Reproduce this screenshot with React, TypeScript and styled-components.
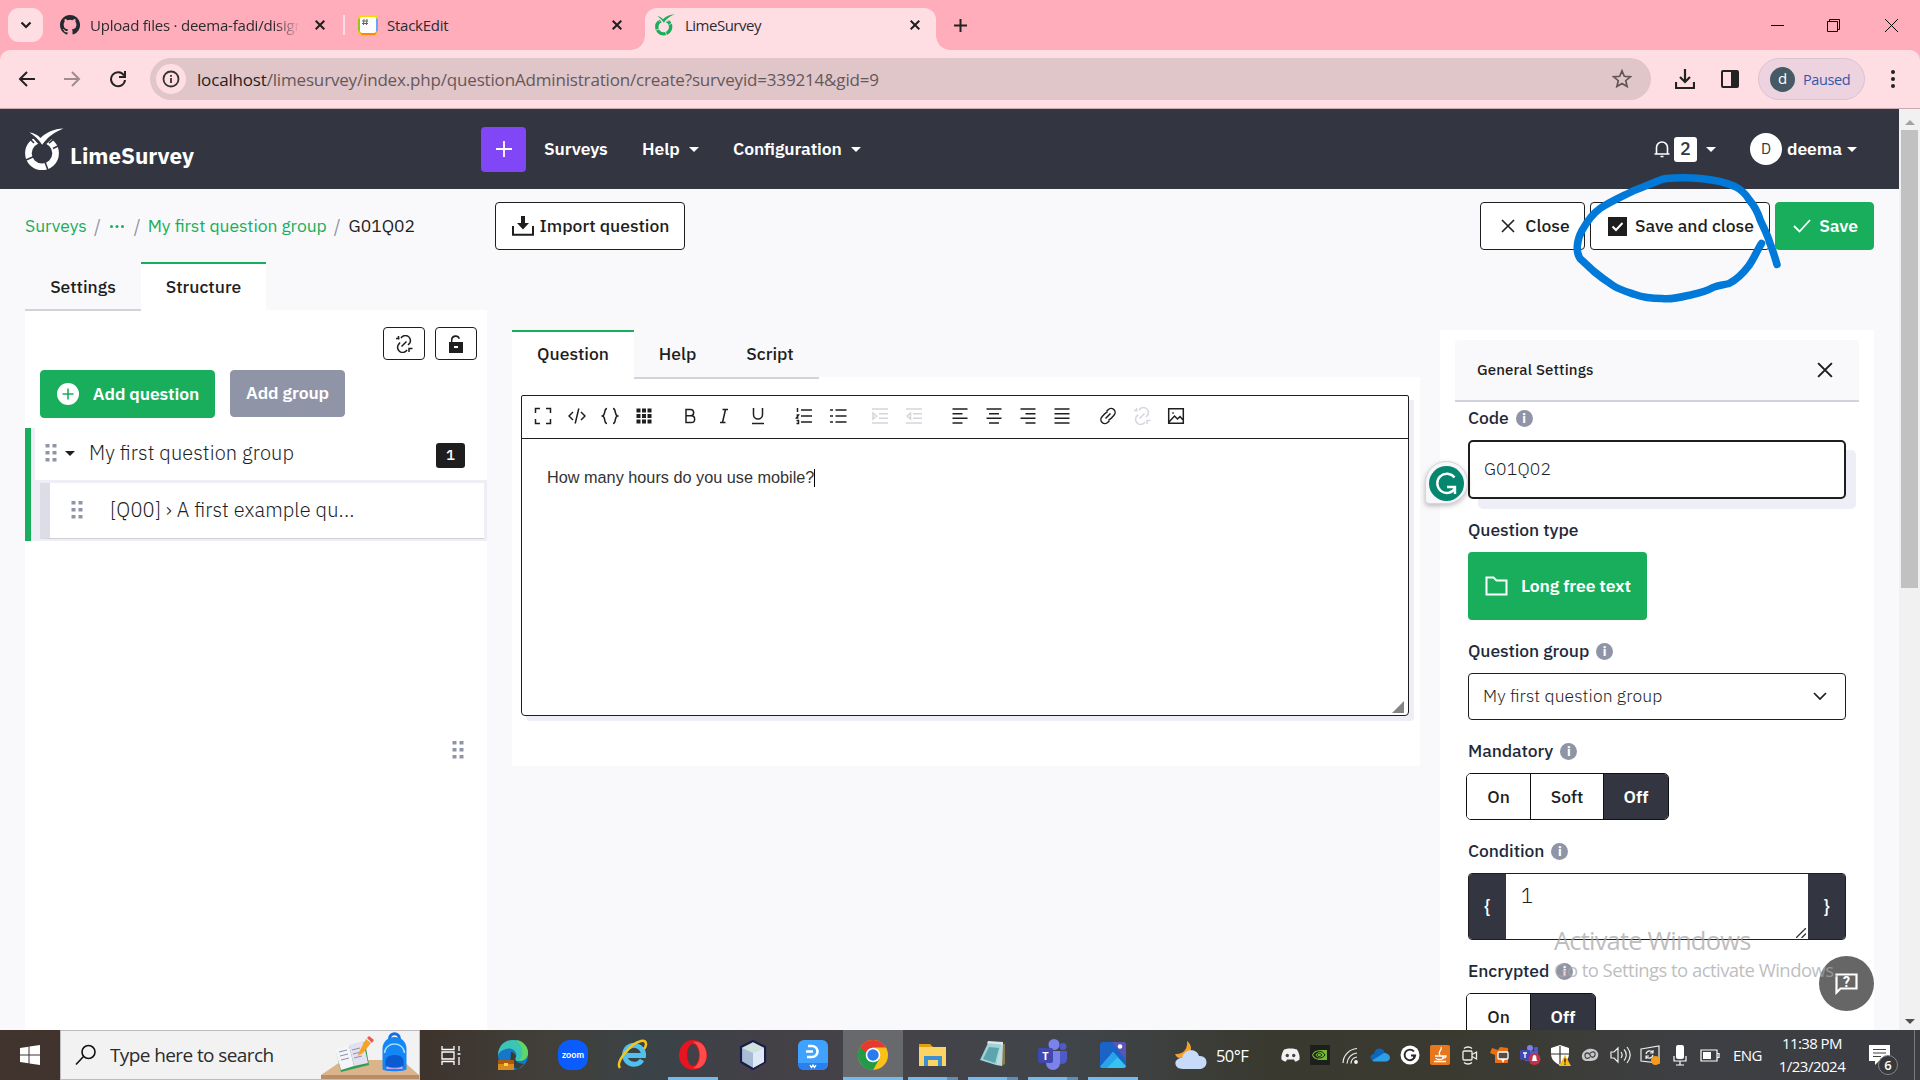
import React from 'react';
import styled, { createGlobalStyle, css } from 'styled-components';

const plex = `"IBM Plex Sans", Roboto, "Liberation Sans", sans-serif`;
const segoe = `"Segoe UI", "Open Sans", "Noto Sans", sans-serif`;

const c = {
  green: '#18ae5c',
  ink: '#1e1e1e',
  dark: '#333641',
  grey: '#9094a7',
  lav: '#eeeef7',
  line: '#d2d3da',
  page: '#f9f9fb',
};

const Global = createGlobalStyle`
  * { box-sizing: border-box; }
  body { margin: 0; background: ${c.page}; overflow: hidden; }
  svg { display: block; flex: none; }
`;

const Screen = styled.div`
  position: relative;
  width: 1920px;
  height: 1080px;
  display: flex;
  flex-direction: column;
  overflow: hidden;
  font-family: ${plex};
  color: ${c.ink};
`;

const Txt = styled.span<{ $s?: number; $ls?: number; $w?: number; $c?: string }>`
  font-size: ${(p) => p.$s ?? 17.5}px;
  letter-spacing: ${(p) => (p.$ls ? `${p.$ls}px` : 'normal')};
  font-weight: ${(p) => p.$w ?? 400};
  ${(p) => p.$c && `color: ${p.$c};`}
  white-space: pre;
  flex: none;
`;
/* text lifted slightly above the optical centre of its row */
const Lifted = styled(Txt)`
  padding-bottom: 2px;
`;
const Strong = styled(Lifted)`
  font-weight: 600;
  letter-spacing: -0.1px;
`;

const Gap = styled.span<{ $w: number }>`
  flex: 0 0 ${(p) => p.$w}px;
`;
const Grow = styled.span`
  flex: 1;
`;

/* ---------- browser chrome ---------- */
const TabStrip = styled.div`
  height: 50px;
  flex: none;
  background: #ffadbb;
  display: flex;
  align-items: center;
  font-family: ${segoe};
  padding-left: 8px;
`;
const TabSearch = styled.div`
  width: 35px;
  height: 34px;
  border-radius: 11px;
  background: #ffdee3;
  display: grid;
  place-items: center;
`;
const TabTitle = styled.div<{ $w: number; $fade?: boolean }>`
  width: ${(p) => p.$w}px;
  overflow: hidden;
  display: flex;
  flex: none;
  ${(p) => p.$fade && css`mask-image: linear-gradient(90deg, #000 88%, transparent);`}
`;
const TabDivider = styled.span`
  width: 2px;
  height: 20px;
  background: #ffdee3;
`;
const ActiveTab = styled.div`
  position: relative;
  align-self: flex-end;
  height: 42px;
  width: 291px;
  margin-left: 22px;
  border-radius: 12px 12px 0 0;
  background: #ffdee3;
  display: flex;
  align-items: center;
  padding: 0 16px 8px 10px;
  &::before,
  &::after {
    content: '';
    position: absolute;
    bottom: 0;
    width: 14px;
    height: 14px;
  }
  &::before {
    left: -14px;
    background: radial-gradient(circle at 0 0, transparent 13.5px, #ffdee3 14px);
  }
  &::after {
    right: -14px;
    background: radial-gradient(circle at 100% 0, transparent 13.5px, #ffdee3 14px);
  }
`;
const ToolbarWrap = styled.div`
  height: 59px;
  flex: none;
  background: #ffadbb;
`;
const Toolbar = styled.div`
  height: 59px;
  border-bottom: 1px solid #c9aab0;
  border-radius: 10px 10px 0 0;
  background: #ffdee3;
  display: flex;
  align-items: center;
  font-family: ${segoe};
  padding-left: 18px;
`;
const Omnibox = styled.div`
  width: 1501px;
  height: 42px;
  border-radius: 21px;
  background: #e0c5c9;
  display: flex;
  align-items: center;
  padding: 0 19px 0 6px;
`;
const SiteInfo = styled.div`
  width: 30px;
  height: 30px;
  border-radius: 50%;
  background: #ffdee3;
  display: grid;
  place-items: center;
`;
const Profile = styled.div`
  width: 107px;
  height: 42px;
  border-radius: 21px;
  border: 1px solid #dcc3d0;
  background: #edd3e0;
  display: flex;
  align-items: center;
  padding-left: 11px;
`;
const ProfileDot = styled.div`
  width: 25px;
  height: 25px;
  border-radius: 50%;
  background: #455a64;
  color: #fff;
  font-size: 15px;
  line-height: 23px;
  text-align: center;
  margin-right: 8px;
`;

/* ---------- page ---------- */
const Viewport = styled.div`
  height: 921px;
  flex: none;
  display: flex;
`;
const Page = styled.div`
  width: 1899px;
  background: ${c.page};
  overflow: hidden;
  font-feature-settings: 'liga' 1;
`;
const Scrollbar = styled.div`
  width: 21px;
  background: #f1f1f1;
  display: flex;
  flex-direction: column;
  align-items: center;
  justify-content: space-between;
  padding: 11px 0 6px;
`;
const Thumb = styled.div`
  width: 17px;
  height: 458px;
  background: #c1c1c1;
  margin: 5px 0 auto;
`;
const Tri = styled.i<{ $w?: number; $h?: number; $c?: string; $up?: boolean }>`
  flex: none;
  width: 0;
  height: 0;
  border: ${(p) => p.$w ?? 5}px solid transparent;
  border-${(p) => (p.$up ? 'bottom' : 'top')}: ${(p) => p.$h ?? 5}px solid ${(p) => p.$c ?? '#fff'};
  border-${(p) => (p.$up ? 'top' : 'bottom')}: 0;
`;
const Navbar = styled.header`
  height: 80px;
  background: ${c.dark};
  color: #fff;
  display: flex;
  align-items: center;
  padding-left: 25px;
`;
const Brand = styled.div`
  width: 456px;
  display: flex;
  align-items: center;
`;
const BrandName = styled.span`
  padding-top: 13px;
  font-size: 22.5px;
  font-weight: 700;
`;
const PlusButton = styled.div`
  width: 45px;
  height: 45px;
  border-radius: 4px;
  background: #8146f6;
  display: grid;
  place-items: center;
  margin-right: 18px;
`;
const NavItem = styled.div<{ $w: number }>`
  width: ${(p) => p.$w}px;
  display: flex;
  align-items: center;
  gap: 9px;
`;
const Count = styled.div`
  width: 23px;
  height: 25px;
  border-radius: 3px;
  background: #fff;
  color: ${c.dark};
  font-size: 18px;
  font-weight: 500;
  line-height: 23px;
  text-align: center;
  margin: 0 9px 0 4px;
`;
const Avatar = styled.div`
  width: 32px;
  height: 32px;
  border-radius: 50%;
  background: #fff;
  color: ${c.dark};
  font-size: 15px;
  line-height: 32px;
  text-align: center;
  margin: 0 5px 0 34px;
`;
const ActionBar = styled.div`
  height: 73px;
  display: flex;
  align-items: center;
  padding: 1px 25px 0 25px;
`;
const Crumbs = styled.nav`
  width: 470px;
  display: flex;
  align-items: center;
`;
const Btn = styled.div<{ $w: number; $h?: number; $bg?: string; $pl?: number }>`
  flex: none;
  width: ${(p) => p.$w}px;
  height: ${(p) => p.$h ?? 48}px;
  border-radius: 4px;
  border: 1px solid ${(p) => p.$bg ?? c.ink};
  background: ${(p) => p.$bg ?? '#fff'};
  color: ${(p) => (p.$bg ? '#fff' : c.ink)};
  display: flex;
  align-items: center;
  justify-content: center;
  padding-left: ${(p) => p.$pl ?? 0}px;
`;
const Columns = styled.div`
  display: flex;
  align-items: flex-start;
  padding-left: 25px;
`;
const Side = styled.aside`
  width: 462px;
`;
const Tabs = styled.div`
  display: flex;
  height: 48px;
`;
const Tab = styled.div<{ $w: number; $active?: boolean; $raise?: number }>`
  width: ${(p) => p.$w}px;
  height: 49px;
  display: flex;
  align-items: center;
  justify-content: center;
  ${(p) =>
    p.$active
      ? css`
          background: #fff;
          border-top: 2px solid ${c.green};
          padding-bottom: ${2 + (p.$raise ?? 0)}px;
        `
      : css`
          border-bottom: 2px solid ${c.line};
          padding-top: ${2 - (p.$raise ?? 0)}px;
        `}
`;
const SideBody = styled.div`
  background: #fff;
  height: 720px;
`;
const IconRow = styled.div`
  display: flex;
  justify-content: flex-end;
  gap: 10px;
  padding: 17px 10px 10px 0;
`;
const AddRow = styled.div`
  display: flex;
  gap: 15px;
  padding: 0 0 10px 15px;
`;
const Tree = styled.div`
  border-left: 6px solid ${c.green};
  background: ${c.lav};
  height: 113px;
  padding-left: 4px;
`;
const GroupRow = styled.div`
  height: 52px;
  background: #fff;
  display: flex;
  align-items: center;
  padding: 0 22px 2px 10px;
`;
const QuestionRow = styled.div`
  margin: 3px 3px 0 5px;
  height: 56px;
  background: #fff;
  border-left: 10px solid #dddde8;
  border-bottom: 1px solid #d0d0d4;
  display: flex;
  align-items: center;
  padding: 0 0 1px 21px;
`;
const Badge = styled.div`
  width: 29px;
  height: 25px;
  border-radius: 3px;
  background: ${c.ink};
  color: #fff;
  font-size: 15px;
  font-weight: 500;
  line-height: 24px;
  text-align: center;
  margin-top: 4px;
`;
const ResizeHandle = styled.div`
  display: flex;
  justify-content: flex-end;
  padding: 200px 23px 0 0;
`;
const Main = styled.main`
  width: 908px;
  margin: 68px 20px 0 25px;
`;
const EditorPanel = styled.div`
  background: #fff;
  height: 389px;
  margin-top: -1px;
  padding: 18px 11px 0 9px;
`;
const Editor = styled.div`
  height: 321px;
  border: 1px solid ${c.ink};
  border-radius: 2px 2px 4px 4px;
  background: #fff;
  box-shadow: 5px 5px 0 ${c.lav};
  display: flex;
  flex-direction: column;
`;
const EditorBar = styled.div`
  height: 43px;
  border-bottom: 1px solid ${c.ink};
  display: flex;
  align-items: center;
  padding: 0 0 2px 12px;
`;
const Slot = styled.span<{ $w: number; $dim?: boolean }>`
  width: ${(p) => p.$w}px;
  color: ${(p) => (p.$dim ? '#d5d5dd' : '#1f1f22')};
  display: flex;
  align-items: center;
  flex: none;
`;
const EditorText = styled.div`
  flex: 1;
  padding: 28px 0 0 25px;
  font-family: Arial, 'Liberation Sans', sans-serif;
  display: flex;
  align-items: flex-start;
  line-height: 20px;
  color: #333;
`;
const Caret = styled.span`
  width: 1px;
  height: 18px;
  background: #000;
  margin-top: 2px;
`;
const Corner = styled.div`
  align-self: flex-end;
  border: 6px solid transparent;
  border-right-color: #858585;
  border-bottom-color: #858585;
  margin: 0 4px 2px 0;
`;
const Settings = styled.aside`
  width: 434px;
  height: 720px;
  margin-top: 68px;
  background: #fff;
  padding: 10px 15px 0 15px;
`;
const SettingsHead = styled.div`
  height: 62px;
  background: ${c.page};
  border-bottom: 2px solid ${c.line};
  border-radius: 4px 4px 0 0;
  display: flex;
  align-items: center;
  justify-content: space-between;
  padding: 0 26px 1px 22px;
`;
const Field = styled.div<{ $mt: number; $gap: number }>`
  margin: ${(p) => p.$mt}px 0 0 13px;
  display: flex;
  flex-direction: column;
  gap: ${(p) => p.$gap}px;
`;
const Label = styled.div`
  display: flex;
  align-items: center;
  height: 20px;
  color: #1e2a3a;
  gap: 7px;
`;
const Info = styled.i`
  width: 17px;
  height: 17px;
  border-radius: 50%;
  background: ${c.grey};
  color: #fff;
  font: 700 13px/17px ${plex};
  text-align: center;
  margin-top: 1px;
`;
const Input = styled.div`
  width: 378px;
  height: 59px;
  border: 2px solid ${c.ink};
  border-radius: 5px;
  background: #fff;
  box-shadow: 10px 10px 0 ${c.lav};
  display: flex;
  align-items: center;
  padding: 0 0 2px 14px;
`;
const TypeButton = styled.div`
  width: 179px;
  height: 68px;
  border-radius: 4px;
  background: ${c.green};
  display: flex;
  align-items: center;
  padding-left: 17px;
  gap: 13px;
  color: #fff;
`;
const Select = styled.div`
  width: 378px;
  height: 47px;
  border: 1px solid ${c.ink};
  border-radius: 4px;
  display: flex;
  align-items: center;
  justify-content: space-between;
  padding: 0 18px 1px 14px;
`;
const Segments = styled.div`
  display: flex;
  height: 47px;
  width: fit-content;
  margin-left: -2px;
  border: 1px solid #111;
  border-radius: 5px;
  overflow: hidden;
`;
const Segment = styled.div<{ $w: number; $on?: boolean }>`
  width: ${(p) => p.$w}px;
  display: grid;
  place-items: center;
  background: ${(p) => (p.$on ? c.dark : '#fff')};
  color: ${(p) => (p.$on ? '#fff' : c.ink)};
  & + & {
    border-left: 1px solid #111;
  }
`;
const Condition = styled.div`
  width: 378px;
  height: 67px;
  border: 1px solid ${c.ink};
  border-radius: 4px;
  display: flex;
  overflow: hidden;
`;
const Brace = styled.div`
  width: 37px;
  background: ${c.dark};
  color: #fff;
  display: grid;
  place-items: center;
`;
const Area = styled.div`
  flex: 1;
  display: flex;
  justify-content: space-between;
  align-items: flex-end;
  padding: 0 2px 1px 15px;
`;
const AreaText = styled.div`
  align-self: flex-start;
  padding-top: 10px;
  line-height: 24px;
`;

/* ---------- overlays ---------- */
const Annotation = styled.svg`
  position: absolute;
  left: 1560px;
  top: 160px;
`;
const Grammarly = styled.div`
  position: absolute;
  left: 1425px;
  top: 461px;
  width: 43px;
  height: 43px;
  border-radius: 22px 22px 22px 4px;
  background: #f7f7fa;
  border: 1px solid #d5d5dc;
  box-shadow: 0 2px 5px rgba(0, 0, 0, 0.25);
  padding: 4px 3px;
`;
const Watermark = styled.div`
  position: absolute;
  left: 1554px;
  top: 926px;
  display: flex;
  flex-direction: column;
  font-family: ${segoe};
  color: rgba(168, 168, 168, 0.75);
  line-height: 29px;
`;
const HelpBubble = styled.div`
  position: absolute;
  left: 1819px;
  top: 956px;
  width: 55px;
  height: 55px;
  border-radius: 50%;
  background: #666;
  display: grid;
  place-items: center;
`;

/* ---------- taskbar ---------- */
const Taskbar = styled.div`
  height: 50px;
  flex: none;
  display: flex;
  align-items: stretch;
  color: #fff;
  font-family: ${segoe};
  background: linear-gradient(90deg, #41342f 0, #3c3029 20%, #42403b 29%, #3a4348 34%, #434046 40%, #444348 46%, #40454a 56%, #39392f 66%, #3a3a30 76%, #3e3f43 88%, #3c3d42 100%);
`;
const Start = styled.div`
  width: 60px;
  display: grid;
  place-items: center;
`;
const SearchBox = styled.div`
  width: 360px;
  background: #f2f2f2;
  border: 1px solid #bdbdbd;
  color: #2b2b2b;
  display: flex;
  align-items: center;
  padding-left: 14px;
`;
const Pinned = styled.div<{ $w?: number; $active?: boolean; $run?: 'one' | 'many' }>`
  width: ${(p) => p.$w ?? 60}px;
  flex: none;
  display: grid;
  place-items: center;
  background: ${(p) => (p.$active ? '#68696d' : 'transparent')};
  border-bottom: 3px solid transparent;
  padding-top: 3px;
  ${(p) =>
    p.$run &&
    css`
      border-image: linear-gradient(
          90deg,
          ${p.$active ? '#76b9ed' : 'transparent'} 6px,
          #76b9ed 6px,
          #76b9ed ${p.$run === 'many' ? 44 : 54}px,
          ${p.$run === 'many' ? '#5f8fb7' : p.$active ? '#76b9ed' : 'transparent'} ${p.$run === 'many' ? 44 : 54}px,
          ${p.$run === 'many' ? '#5f8fb7' : p.$active ? '#76b9ed' : 'transparent'} 54px,
          ${p.$active ? '#76b9ed' : 'transparent'} 54px
        )
        1 / 0 0 3px 0;
    `}
`;
const Weather = styled.div`
  width: 132px;
  display: flex;
  align-items: center;
  padding-left: 32px;
  gap: 9px;
`;
const Tray = styled.div`
  display: flex;
`;
const TrayItem = styled.div`
  width: 30px;
  display: grid;
  place-items: center;
`;
const Lang = styled.div`
  width: 49px;
  display: flex;
  align-items: center;
  padding-left: 8px;
`;
const Clock = styled.div`
  width: 76px;
  display: flex;
  flex-direction: column;
  align-items: center;
  line-height: 23px;
  padding-top: 2px;
`;
const Notice = styled.div`
  position: relative;
  flex: 1;
  padding: 15px 0 0 19px;
`;
const NoticeCount = styled.div`
  position: absolute;
  left: 28px;
  top: 25px;
  width: 20px;
  height: 20px;
  border-radius: 50%;
  border: 1px solid #85868a;
  background: #37383c;
  font: 600 13px/18px ${segoe};
  text-align: center;
`;
const ShowDesktop = styled.div`
  width: 6px;
  border-left: 1px solid #77787b;
`;

/* ---------- icons ---------- */
type IP = { d: string; s?: number; w?: number; vb?: string; fill?: boolean; color?: string; h?: number };
const Icon = ({ d, s = 18, h, w = 1.5, vb = '0 0 18 18', fill, color = 'currentColor' }: IP) => (
  <svg width={s} height={h ?? s} viewBox={vb} fill={fill ? color : 'none'} stroke={fill ? 'none' : color} strokeWidth={w} fillRule="evenodd">
    <path d={d} />
  </svg>
);

const LimeLogo = ({ s, color = '#fff', cut = c.dark }: { s: number; color?: string; cut?: string }) => (
  <svg width={s} height={s * 1.08} viewBox="0 0 39 42" fill="none">
    <circle cx="17" cy="25.2" r="13.6" stroke={color} strokeWidth="6.6" />
    <path d="M5 7l12 13L30 8l-13-5z" fill={cut} />
    <path d="M24 15l8-7M28 20.500l6-3M1 32l9-4M20 34l3 8M9 15l-5-5" stroke={cut} strokeWidth="1.600" />
    <path d="M4.500 4.500c4 .3 8 2.300 11 5.500C21 4.500 29 .8 38.500.5 29.500 4 22 9.500 17.200 16.800 13.500 11.500 9.500 7.500 4.500 4.500z" fill={color} />
  </svg>
);
const Dots = () => (
  <svg width="12" height="18" fill={c.grey}>
    {[0.5, 7.5].map((x) => [0, 7, 14].map((y) => <rect key={x + '-' + y} x={x} y={y} width="4" height="3.500" />))}
  </svg>
);
const CloseX = ({ s = 10, w = 2 }: { s?: number; w?: number }) => (
  <Icon s={s} vb="0 0 10 10" w={(w * 10) / s} d="M.7.7l8.600 8.600M9.300.7L.7 9.300" />
);
const Unlink = 'M6 3.200A4.600 4.600 0 0 1 14.800 8L13 10M12 14.800A4.600 4.600 0 0 1 3.200 10L5 7.500M6.500 11.500l5-5M1 3.500h3.500M3.500 1v3.500M14 17v-3.500h3.500';

const editorIcons: [string, number, boolean?, boolean?][] = [
  ['M1.500 6V1.500H6M12 1.500h4.500V6M16.500 12v4.500H12M6 16.500H1.500V12', 34],
  ['M5 5L1 9l4 4M13 5l4 4-4 4M10.800 1.500L7.200 16.500', 33],
  ['M6 1.500C2.500 1.500 5 8 1.500 9 5 10 2.500 16.500 6 16.500M12 1.500C15.500 1.500 13 8 16.500 9 13 10 15.500 16.500 12 16.500', 34],
  ['M1.500 1.500h4v4h-4zM7 1.500h4v4H7zM12.500 1.500h4v4h-4zM1.500 7h4v4h-4zM7 7h4v4H7zM12.500 7h4v4h-4zM1.500 12.500h4v4h-4zM7 12.500h4v4H7zM12.500 12.500h4v4h-4z', 46, false, true],
  ['M5 2.500h4.500a3.100 3.100 0 0 1 0 6.300H5zM5 8.800h5.300a3.300 3.300 0 0 1 0 6.700H5z', 34],
  ['M7.500 2.500h5.500M5 15.500h5.500M10.500 2.500L7.500 15.500', 34],
  ['M4.500 1v6.500a4.500 4.500 0 0 0 9 0V1M3 16.500h12', 46],
  ['M6 3h11M6 9h11M6 15h11M2.500 1v4M1.500 8h2l-2 3h2M1.500 13.500h2v3h-2', 34],
  ['M6.500 3h11M6.500 9h11M6.500 15h11M1 3h3M1 9h3M1 15h3', 42],
  ['M1 2h16M8 6.700h9M8 11.300h9M1 16h16M2 6l3.500 3L2 12z', 34, true],
  ['M1 2h16M8 6.700h9M8 11.300h9M1 16h16M5.500 6L2 9l3.500 3z', 46, true],
  ['M1.500 2h15M1.500 6.700h10M1.500 11.300h15M1.500 16h10', 34],
  ['M1.500 2h15M4 6.700h10M1.500 11.300h15M4 16h10', 34],
  ['M1.500 2h15M6.500 6.700h10M1.500 11.300h15M6.500 16h10', 34],
  ['M1.500 2h15M1.500 6.700h15M1.500 11.300h15M1.500 16h15', 46],
  ['M7.500 4.500l1.600-1.800a4 4 0 0 1 5.900 5.600l-3 3.200a4 4 0 0 1-2.500 1.200M10.500 13.500l-1.600 1.800A4 4 0 0 1 3 9.700l3-3.200a4 4 0 0 1 2.500-1.200M6.500 11.500l5-5', 34],
  [Unlink, 34, true],
  ['M1.700 1.700h14.600v14.600H1.700zM2 15l5.500-6 3 3 2.500-2.500 3.500 4M6 5.200v1.600', 30],
];

const LabelRow = ({ text, info = true }: { text: string; info?: boolean }) => (
  <Label>
    <Lifted $w={500} $ls={-0.08}>{text}</Lifted>
    {info && <Info>i</Info>}
  </Label>
);

const Browser = () => (
  <>
    <TabStrip>
      <TabSearch><Icon s={12} vb="0 0 12 12" w={2.2} d="M1.500 3.500L6 8l4.500-4.500" /></TabSearch>
      <Gap $w={17} />
      <svg width="20" height="20" viewBox="0 0 16 16" fill="#24292f"><path d="M8 0C3.580 0 0 3.580 0 8c0 3.540 2.290 6.530 5.470 7.590.4.070.55-.17.55-.38v-1.490c-2.010.37-2.530-.49-2.690-.94-.09-.23-.48-.94-.82-1.130-.28-.15-.68-.52-.01-.53.63-.01 1.080.58 1.230.82.72 1.210 1.870.87 2.330.66.07-.52.28-.87.51-1.070-1.780-.2-3.640-.89-3.640-3.950 0-.87.31-1.590.82-2.150-.08-.2-.36-1.020.08-2.120 0 0 .67-.21 2.200.82a7.600 7.600 0 0 1 4 0c1.530-1.040 2.200-.82 2.200-.82.44 1.100.16 1.920.08 2.120.51.56.82 1.270.82 2.150 0 3.070-1.870 3.750-3.650 3.950.29.25.54.73.54 1.480v2.200c0 .21.150.46.550.38A8 8 0 0 0 8 0z" /></svg>
      <Gap $w={10} />
      <TabTitle $w={210} $fade><Txt $s={15} $ls={-0.22} $c="#2b2b30">Upload files · deema-fadi/disign</Txt></TabTitle>
      <Gap $w={15} />
      <CloseX />
      <Gap $w={18} />
      <TabDivider />
      <Gap $w={13} />
      <svg width="20" height="20" viewBox="0 0 20 20">
        <rect width="20" height="20" rx="4" fill="#ffd500" />
        <path d="M1 3l9 7-9 7L0 15V5z" fill="#9bc320" />
        <path d="M19 3l-9 7 9 7 1-2V5z" fill="#61a8f8" />
        <path d="M1 17l9-7 9 7-2 3H4z" fill="#ff8a00" />
        <rect x="2" y="2" width="16" height="16" rx="2" fill="#fff" />
        <path d="M6 4L5.500 10M9 4l-.5 6M4 6h6M4 8.500h6" stroke="#666" />
      </svg>
      <Gap $w={9} />
      <TabTitle $w={216}><Txt $s={15} $ls={-0.25} $c="#2b2b30">StackEdit</Txt></TabTitle>
      <Gap $w={9} />
      <CloseX />
      <Gap $w={1} />
      <ActiveTab>
        <LimeLogo s={20} color="#18ae5c" cut="#ffdee3" />
        <Gap $w={10} />
        <Txt $s={15} $ls={-0.5} $c="#2b2b30">LimeSurvey</Txt>
        <Grow />
        <CloseX />
      </ActiveTab>
      <Gap $w={18} />
      <Icon s={13} vb="0 0 13 13" w={2} d="M6.500 0v13M0 6.500h13" color="#222" />
      <Grow />
      <Icon s={13} vb="0 0 13 13" w={1} d="M0 6.500h13" color="#000" />
      <Gap $w={43} />
      <Icon s={13} vb="0 0 13 13" w={1} d="M.5 2.500h10v10H.5zM2.500 2.500v-2h10v10h-2" color="#000" />
      <Gap $w={45} />
      <Icon s={13} vb="0 0 13 13" w={1} d="M0 0l13 13M13 0L0 13" color="#000" />
      <Gap $w={22} />
    </TabStrip>
    <ToolbarWrap>
      <Toolbar>
        <Icon w={2} d="M17 9H2M9 2L2 9l7 7" color="#222" />
        <Gap $w={27} />
        <Icon w={2} d="M1 9h15M9 2l7 7-7 7" color="#a18b90" />
        <Gap $w={28} />
        <Icon w={2} d="M15 5.500A7 7 0 1 0 16 10M16 1v6h-6" color="#222" />
        <Gap $w={23} />
        <Omnibox>
          <SiteInfo><Icon w={1.8} d="M9 1.500a7.500 7.500 0 1 0 0 15 7.500 7.500 0 0 0 0-15zM9 8v5M9 5v1.800" color="#333" /></SiteInfo>
          <Gap $w={11} />
          <Txt $s={17} $ls={-0.17} $c="#1f1f1f">localhost</Txt>
          <Txt $s={17} $ls={-0.17} $c="#65585b">/limesurvey/index.php/questionAdministration/create?surveyid=339214&amp;gid=9</Txt>
          <Grow />
          <Icon s={20} vb="0 0 20 20" w={1.7} color="#635659" d="M10 1.800l2.300 5.500 6 .5-4.600 3.900 1.400 5.800-5.100-3.100-5.100 3.100 1.400-5.800L1.700 7.800l6-.5z" />
        </Omnibox>
        <Gap $w={24} />
        <Icon s={20} vb="0 0 20 20" w={2.2} d="M10 0v12M5 8l5 5 5-5M1 13v6h18v-6" color="#222" />
        <Gap $w={26} />
        <svg width="18" height="18"><rect x="1" y="1" width="16" height="16" rx="1" fill="none" stroke="#222" strokeWidth="2" /><path d="M10 1h7v16h-7z" fill="#222" /></svg>
        <Gap $w={19} />
        <Profile>
          <ProfileDot>d</ProfileDot>
          <Txt $s={14.5} $ls={-0.4} $c="#3556a8">Paused</Txt>
        </Profile>
        <Gap $w={26} />
        <svg width="4" height="18" fill="#222"><circle cx="2" cy="2" r="2" /><circle cx="2" cy="9" r="2" /><circle cx="2" cy="16" r="2" /></svg>
      </Toolbar>
    </ToolbarWrap>
  </>
);

const Sidebar = () => (
  <Side>
    <Tabs>
      <Tab $w={116}><Txt $w={500}>Settings</Txt></Tab>
      <Tab $w={125} $active><Txt $w={500}>Structure</Txt></Tab>
    </Tabs>
    <SideBody>
      <IconRow>
        <Btn $w={42} $h={33}><Icon d={Unlink} /></Btn>
        <Btn $w={42} $h={33}>
          <Icon s={16} h={18} vb="0 0 16 18" fill d="M1 7h14v11H1zM6 11v2h4v-2zM3 7V5a4.600 4.600 0 0 1 9-1.500l-1.300.5A3.300 3.300 0 0 0 4.400 5v2z" />
        </Btn>
      </IconRow>
      <AddRow>
        <Btn $w={175} $bg={c.green} $pl={1}>
          <svg width="22" height="22"><circle cx="11" cy="11" r="11" fill="#fff" /><path d="M11 5.500v11M5.500 11h11" stroke={c.green} strokeWidth="1.600" /></svg>
          <Gap $w={14} />
          <Strong>Add question</Strong>
        </Btn>
        <Btn $w={115} $h={47} $bg={c.grey}><Strong>Add group</Strong></Btn>
      </AddRow>
      <Tree>
        <GroupRow>
          <Dots />
          <Gap $w={8} />
          <Tri $c="#1e1e1e" />
          <Gap $w={14} />
          <Lifted $s={20} $w={300} $ls={0.12}>My first question group</Lifted>
          <Grow />
          <Badge>1</Badge>
        </GroupRow>
        <QuestionRow>
          <Dots />
          <Gap $w={27} />
          <Lifted $s={20} $w={300} $ls={0.12}>[Q00] › A first example qu...</Lifted>
        </QuestionRow>
      </Tree>
      <ResizeHandle><Dots /></ResizeHandle>
    </SideBody>
  </Side>
);

const EditorColumn = () => (
  <Main>
    <Tabs>
      <Tab $w={122} $active $raise={2}><Txt $w={500}>Question</Txt></Tab>
      <Tab $w={87} $raise={2}><Txt $w={500}>Help</Txt></Tab>
      <Tab $w={98} $raise={2}><Txt $w={500}>Script</Txt></Tab>
    </Tabs>
    <EditorPanel>
      <Editor>
        <EditorBar>
          {editorIcons.map(([d, w, dim, fill], i) => (
            <Slot key={i} $w={w} $dim={dim}><Icon s={18} d={d} fill={fill} /></Slot>
          ))}
        </EditorBar>
        <EditorText>
          <Txt $s={16.25}>How many hours do you use mobile?</Txt>
          <Caret />
        </EditorText>
        <Corner />
      </Editor>
    </EditorPanel>
  </Main>
);

const SettingsPanel = () => (
  <Settings>
    <SettingsHead>
      <Txt $s={15} $w={500} $ls={0.16}>General Settings</Txt>
      <CloseX s={16} w={2} />
    </SettingsHead>
    <Field $mt={6} $gap={12}>
      <LabelRow text="Code" />
      <Input><Txt $w={300} $ls={0.15}>G01Q02</Txt></Input>
    </Field>
    <Field $mt={21} $gap={12}>
      <LabelRow text="Question type" info={false} />
      <TypeButton>
        <Icon s={23} h={20} vb="0 0 23 20" w={2} d="M1.500 1.500h7l3 3h10v14h-20z" />
        <Strong>Long free text</Strong>
      </TypeButton>
    </Field>
    <Field $mt={21} $gap={12}>
      <LabelRow text="Question group" />
      <Select>
        <Lifted $w={300} $ls={0.1}>My first question group</Lifted>
        <Icon s={14} vb="0 0 14 14" w={1.7} d="M1 4l6 6 6-6" />
      </Select>
    </Field>
    <Field $mt={21} $gap={12}>
      <LabelRow text="Mandatory" />
      <Segments>
        <Segment $w={63}><Txt $w={500}>On</Txt></Segment>
        <Segment $w={73}><Txt $w={500}>Soft</Txt></Segment>
        <Segment $w={65} $on><Txt $w={600}>Off</Txt></Segment>
      </Segments>
    </Field>
    <Field $mt={21} $gap={12}>
      <LabelRow text="Condition" />
      <Condition>
        <Brace><Txt $s={18} $w={500}>{'{'}</Txt></Brace>
        <Area>
          <AreaText><Txt $s={20} $w={300}>1</Txt></AreaText>
          <Icon s={10} vb="0 0 10 10" w={1.3} d="M0 10L10 0M5.500 10L10 5.500" color="#333" />
        </Area>
        <Brace><Txt $s={18} $w={500}>{'}'}</Txt></Brace>
      </Condition>
    </Field>
    <Field $mt={21} $gap={12}>
      <LabelRow text="Encrypted" />
      <Segments>
        <Segment $w={63}><Txt $w={500}>On</Txt></Segment>
        <Segment $w={65} $on><Txt $w={600}>Off</Txt></Segment>
      </Segments>
    </Field>
  </Settings>
);

const BottomBar = () => (
  <Taskbar>
    <Start>
      <svg width="20" height="20" fill="#fff"><path d="M0 3l8.500-1.200v7.700H0zM9.500 1.600L20 0v9.500H9.500zM0 10.500h8.500v7.800L0 17zM9.500 10.500H20V20l-10.500-1.500z" /></svg>
    </Start>
    <SearchBox>
      <Icon s={22} vb="0 0 22 22" w={1.6} d="M13.500 1.500a6.500 6.500 0 1 0 0 13 6.500 6.500 0 0 0 0-13zM8.500 12.500L1 20.500" color="#111" />
      <Gap $w={13} />
      <Txt $s={19} $ls={-0.6}>Type here to search</Txt>
      <Grow />
      <svg width="98" height="48" viewBox="0 0 98 48">
        <path d="M0 44l22-15h59l17 15v4H0z" fill="#dcb48c" />
        <path d="M0 44h98v4H0z" fill="#b98d66" />
        <path d="M15 20l29-9 4 23-28 7z" fill="#2f9e57" />
        <path d="M14 18l14-4 5 21-13 4z" fill="#f5f4fb" />
        <path d="M28 14l14-4 5 22-14 3z" fill="#e3e0f0" />
        <path d="M18 21l8-2M19 25l8-2M20 29l8-2M31 19l8-2M32 23l8-2M33 27l8-2" stroke="#8f8fa6" />
        <path d="M38 21l7-13 5 4-8 10-5 3z" fill="#f7a325" />
        <path d="M46 7l2-2 5 4-2 3z" fill="#f0574f" />
        <g transform="translate(1.500 0)">
          <path d="M67 8c0-7 10-7 10 0" stroke="#1470d8" strokeWidth="3" fill="none" />
          <path d="M60 38V18c0-16 24-16 24 0v20c0 3-24 3-24 0z" fill="#1487f5" />
          <path d="M62 22c1-12 19-12 20 0" stroke="#9fdcff" strokeWidth="1.500" fill="none" />
          <path d="M63 36v-6c0-8 18-8 18 0v6z" fill="#0b5bd0" />
          <path d="M64 35c5 3 11 3 16 0v3H64z" fill="#c9a4f5" />
        </g>
      </svg>
    </SearchBox>
    <Pinned $w={63}>
      <Icon s={21} h={19} vb="0 0 21 19" w={1.300} d="M1 0v3.500h12V0M1 19v-3.500h12V19M1 6h12v7H1zM18 0v5M18 11v8M16.500 8h3" color="#fff" />
    </Pinned>
    <Pinned>
      <svg width="30" height="30" viewBox="0 0 30 30">
        <circle cx="15" cy="15" r="15" fill="#1676c9" />
        <path d="M0 14C1 5 7 0 15 0s15 6 15 13c0 5-4 8-9 8-4 0-5-2-3-4 2-6-5-10-10-8-4 1-7 3-8 7z" fill="#3cc5b4" />
        <path d="M18 0c8 1 12 7 12 13 0 5-4 8-9 8 5-6 5-14-3-21z" fill="#5fd665" />
        <path d="M13 12c2 0 5 2 5 5-2 3 0 6 8 7l-6 5-8-3z" fill="#3b3b38" />
        <path d="M0 20h16v10H0z" fill="#d98a1c" /><path d="M0 20h16v4H0z" fill="#a85a10" /><path d="M6 23h4v3H6z" fill="#ffd24a" />
      </svg>
    </Pinned>
    <Pinned>
      <svg width="30" height="30"><rect width="30" height="30" rx="12" fill="#0b5cff" /><text x="15" y="17.500" textAnchor="middle" fontFamily="Lato" fontWeight="700" fontSize="9" fill="#fff">zoom</text></svg>
    </Pinned>
    <Pinned>
      <svg width="32" height="32" viewBox="0 0 32 32" fill="none">
        <path d="M25 21a9.500 9.500 0 1 1 1.500-4.500H9" stroke="#4fc1f0" strokeWidth="5" />
        <path d="M3 29C-2 23 14 4 24 2c6-1 6 4 3 8" stroke="#f5c518" strokeWidth="2.500" />
      </svg>
    </Pinned>
    <Pinned $run="one">
      <svg width="28" height="30" viewBox="0 0 28 30"><ellipse cx="14" cy="15" rx="14" ry="15" fill="#e8141f" /><path d="M14 2c18-4 18 30 0 26 9-4 9-22 0-26z" fill="#ff4b4b" /><ellipse cx="14" cy="15" rx="6" ry="11" fill="#434046" /></svg>
    </Pinned>
    <Pinned>
      <svg width="28" height="30" viewBox="0 0 28 30"><path d="M14 1l12 6v15l-12 7-12-7V7z" fill="#a9bcd6" stroke="#1b1e4a" strokeWidth="2.200" /><path d="M14 2.500L25 8l-11 5L3 8z" fill="#cfe3dc" /><path d="M14 13l11-5v14l-11 6z" fill="#dfe8f6" /></svg>
    </Pinned>
    <Pinned>
      <svg width="30" height="30" viewBox="0 0 30 30"><rect width="30" height="30" rx="6" fill="#3fa2ff" /><path d="M0 23h30v1a6 6 0 0 1-6 6H6a6 6 0 0 1-6-6z" fill="#2b80ee" /><path d="M10 6h4a5.500 5.500 0 0 1 0 11h-5M8 11.500h7" stroke="#fff" strokeWidth="2.600" fill="none" /><path d="M12 25l1.500 2.500 1.500-2.500 1.500 2.500 1.500-2.500" stroke="#fff" strokeWidth="1.300" fill="none" /></svg>
    </Pinned>
    <Pinned $active $run="one">
      <svg width="30" height="30" viewBox="0 0 30 30"><circle cx="15" cy="15" r="15" fill="#fbc116" /><path d="M2 7.500A15 15 0 0 0 15 30l6.500-11.300L15 15z" fill="#229a48" /><path d="M2 7.500L8.500 18.800 15 7.500z" fill="#229a48" /><path d="M2 7.500A15 15 0 0 1 28 7.500H15L8 13z" fill="#e33b2e" /><circle cx="15" cy="15" r="7.300" fill="#fff" /><circle cx="15" cy="15" r="5.700" fill="#2b7bee" /></svg>
    </Pinned>
    <Pinned $run="many">
      <svg width="28" height="24" viewBox="0 0 28 24"><path d="M0 1h11l3 3h-14z" fill="#e0a010" /><path d="M0 4h27v19H0z" fill="#fbd463" /><path d="M5 23V13h18v10h-4v-6H9v6z" fill="#3d8fd1" /></svg>
    </Pinned>
    <Pinned $run="many">
      <svg width="28" height="30" viewBox="0 0 28 30"><path d="M23 4h3v20l-3 2z" fill="#8b7a52" /><path d="M18 4l6 0-1 22-6-1z" fill="#b9dcdf" /><path d="M9 3l13 1-5 21L1 20z" fill="#9fd2d7" /><path d="M10 7l10 1-4 15-12-4z" fill="#5da5ac" /><path d="M9 1l15 1v2.500L8 3.500z" fill="#dce8e6" /></svg>
    </Pinned>
    <Pinned $run="many">
      <svg width="30" height="32" viewBox="0 0 30 32"><circle cx="16" cy="5.500" r="5.500" fill="#7b83eb" /><circle cx="25" cy="7.500" r="3.500" fill="#5059c9" /><path d="M20 12h9v8a5 5 0 0 1-9 3z" fill="#5059c9" /><path d="M8 12h14v12a7 7 0 0 1-14 0z" fill="#7b83eb" /><rect y="9" width="15" height="15" rx="2" fill="#4048b0" /><text x="7.500" y="20.500" textAnchor="middle" fontFamily="Open Sans" fontWeight="700" fontSize="11" fill="#fff">T</text></svg>
    </Pinned>
    <Pinned $run="one">
      <svg width="26" height="26" viewBox="0 0 26 26"><rect width="26" height="26" rx="3" fill="#1b63c6" /><path d="M12 0h11a3 3 0 0 1 3 3v15z" fill="#5b56b5" /><path d="M0 25L13 10l13 14c0 1-1 2-3 2H3z" fill="#36c3f2" /><path d="M0 25L13 10l5 5L7 26H3z" fill="#2aa4e8" /><circle cx="20" cy="4.500" r="2.300" fill="#fff" /></svg>
    </Pinned>
    <Weather>
      <svg width="32" height="30" viewBox="0 0 32 30"><path d="M12 1c7 5 5 16-7 17-3 0-4-2-5-4 8 1 13-5 12-13z" fill="#f5a12c" /><path d="M8 29C-2 29-2 18 7 18 9 8 22 8 24 16c10-1 10 13 0 13z" fill="#c7daf8" /></svg>
      <Txt $s={16.5} $ls={-0.6}>50°F</Txt>
    </Weather>
    <Tray>
      <TrayItem><svg width="19" height="14" viewBox="0 0 19 14"><path d="M3 1.500C6 0 13 0 16 1.500c2 3 3 7 2.500 10-2 1.500-3 2-4.500 2l-1-2h-7l-1 2c-1.500 0-2.500-.5-4.500-2C0 8.500 1 4.500 3 1.500z" fill="#f2f2f2" /><circle cx="6.300" cy="7.500" r="1.700" fill="#444" /><circle cx="12.700" cy="7.500" r="1.700" fill="#444" /></svg></TrayItem>
      <TrayItem><svg width="20" height="20"><rect width="20" height="20" fill="#1c1f1c" /><path d="M8 5h9v10H8z" fill="#76b53a" /><path d="M3 10c4-5 9-5 12 0-3 4-8 4-12 0zM6 10c2-2.500 4-2.500 6 0-2 2-4 2-6 0" fill="none" stroke="#1c1f1c" strokeWidth="1" /><path d="M2.500 10c1.500-3 3.500-4 5.500-4M2.500 10c1.500 3 3.500 4 5.500 4M6 10c.5-1 1-1.500 2-1.500M6 10c.5 1 1 1.500 2 1.500" fill="none" stroke="#76b53a" strokeWidth="1.200" /></svg></TrayItem>
      <TrayItem><svg width="16" height="17" fill="none" stroke="#eee" strokeWidth="1.200"><path d="M1 16A15 15 0 0 1 15 1.500M5 16.500A11 11 0 0 1 15 6M9 16.500a7 7 0 0 1 6-6.500" /><circle cx="14" cy="15" r="1.300" fill="#fff" /></svg></TrayItem>
      <TrayItem><svg width="20" height="14" viewBox="0 0 20 14"><path d="M3 12C-1 11 0 6 4 6 5-1 13-1 15 5l-6 8z" fill="#1066b8" /><path d="M2 12.500L14 5c7 0 8 8 2 8.500H4z" fill="#2b9fe8" /></svg></TrayItem>
      <TrayItem><svg width="20" height="20" fill="none"><circle cx="10" cy="10" r="9.500" fill="#fff" /><path d="M14 6.500a5.300 5.300 0 1 0 1.200 4H11M14 10v4" stroke="#2a2a2a" strokeWidth="1.900" /></svg></TrayItem>
      <TrayItem><svg width="20" height="20" fill="none"><rect width="20" height="20" rx="2" fill="#e8761c" /><path d="M11 2c2 3-4 4-1 8M5 11h8v2c0 2-7 2-7 0M13 11h3c0 2-1 2-3 2M4 16.500h12" stroke="#fff" strokeWidth="1.300" /></svg></TrayItem>
      <TrayItem><svg width="16" height="19" fill="none" stroke="#eee" strokeWidth="1.300"><rect x="1" y="5" width="9" height="9" rx="1" /><path d="M10 8.500L14.500 6v7L10 10.500M2 2.500c2-2 6-2 8 0M2 16.500c2 2 6 2 8 0" /></svg></TrayItem>
      <TrayItem><svg width="20" height="18" viewBox="0 0 20 18"><path d="M2 2l6 2 2-3 8 1v15H5V9L0 7z" fill="#ea6f14" /><rect x="8" y="6" width="10" height="7" rx="1" fill="#5a4a42" stroke="#fff" strokeWidth="1.300" /><path d="M11 13l2 4 2-4" fill="#fff" /></svg></TrayItem>
      <TrayItem><svg width="21" height="20" viewBox="0 0 21 20"><circle cx="10" cy="3" r="3" fill="#7b83eb" /><circle cx="16" cy="4" r="2.200" fill="#5059c9" /><rect x="5" y="6" width="13" height="10" fill="#5059c9" /><rect y="5" width="10" height="10" rx="1" fill="#4048b0" /><path d="M3 8h4M5 8v5" stroke="#fff" strokeWidth="1.300" /><circle cx="14.500" cy="14" r="6" fill="#c4314b" /><path d="M11.500 16c2-2 0-6 3-6s1 4 3 6z" fill="#fff" /></svg></TrayItem>
      <TrayItem><svg width="21" height="21" viewBox="0 0 21 21"><path d="M10 0l9 3v6c0 5-4 9-9 11C5 18 1 14 1 9V3z" fill="#fff" /><path d="M10 1v18M1 9h18" stroke="#333" strokeWidth="1.200" /><path d="M15 10l6 11H9z" fill="#fbbc1a" /><path d="M15 13.500v4M15 18.500v1.200" stroke="#222" strokeWidth="1.400" /></svg></TrayItem>
      <TrayItem><svg width="18" height="14" viewBox="0 0 18 14" fill="none"><path d="M5 2C8 0 15 0 17 5c1 5-2 8-7 8H5C0 13-1 5 5 2z" fill="#c9c9cb" /><path d="M9 9c-2 2-5 2-5-1.500S8 4.500 9 7s4 3.500 5 0-3-4-5-1.500" stroke="#4a4a4c" strokeWidth="1.300" /></svg></TrayItem>
      <TrayItem><svg width="21" height="18" fill="none" stroke="#eee" strokeWidth="1.200"><path d="M1 6h3l4-4v14l-4-4H1zM11 6c1.500 2 1.500 4 0 6M14 3.500c3 3 3 8 0 11M17 1c4 5 4 11 0 16" /></svg></TrayItem>
      <TrayItem><svg width="21" height="20" fill="none" stroke="#eee" strokeWidth="1.200"><path d="M1 4l18-3v17L1 16zM6 9c1-4 6-4 7-1M13 5v3h-3M13 10c-1 4-6 4-7 1M6 14v-3h3" /><circle cx="15.500" cy="15.500" r="4.500" fill="#f89a1c" stroke="none" /></svg></TrayItem>
      <TrayItem><svg width="14" height="21" fill="none"><rect x="3" y="0" width="8" height="14" rx="2" fill="#fff" /><path d="M1 11v5h12v-5M7 16v4M3 20h8" stroke="#fff" strokeWidth="1.200" /></svg></TrayItem>
      <TrayItem><svg width="20" height="13" fill="none" stroke="#fff" strokeWidth="1.200"><path d="M1 1h16v11H1zM17 4.500h2v4h-2" /><path d="M3 3h8v7H3z" fill="#fff" stroke="none" /></svg></TrayItem>
    </Tray>
    <Lang><Txt $s={15} $ls={-0.6}>ENG</Txt></Lang>
    <Clock>
      <Txt $s={15} $ls={-0.6}>11:38 PM</Txt>
      <Txt $s={15} $ls={-0.5}>1/23/2024</Txt>
    </Clock>
    <Notice>
      <svg width="21" height="20"><path d="M0 0h21v16h-11l-4 4v-4H0z" fill="#fff" /><path d="M4 4.500h13M4 8h13M4 11.500h8" stroke="#444" strokeWidth="1.200" /></svg>
      <NoticeCount>6</NoticeCount>
    </Notice>
    <ShowDesktop />
  </Taskbar>
);

export default function App() {
  return (
    <Screen>
      <Global />
      <Browser />
      <Viewport>
        <Page>
          <Navbar>
            <Brand>
              <LimeLogo s={39} />
              <Gap $w={6} />
              <BrandName>LimeSurvey</BrandName>
            </Brand>
            <PlusButton><Icon s={16} vb="0 0 16 16" w={1.8} d="M8 0v16M0 8h16" color="#fff" /></PlusButton>
            <NavItem $w={98}><Strong>Surveys</Strong></NavItem>
            <NavItem $w={91}><Strong>Help</Strong><Tri /></NavItem>
            <NavItem $w={150}><Strong>Configuration</Strong><Tri /></NavItem>
            <Gap $w={771} />
            <Icon s={16} h={18} vb="0 0 16 18" w={1.6} d="M.5 14h15M2.500 14V7.500a5.500 5.500 0 0 1 11 0V14M6.500 16.500h3" />
            <Count>2</Count>
            <Tri />
            <Avatar>D</Avatar>
            <Strong>deema</Strong>
            <Gap $w={5} />
            <Tri />
          </Navbar>
          <ActionBar>
            <Crumbs>
              <Lifted $c={c.green}>Surveys</Lifted>
              <Gap $w={7} /><Txt $s={18} $c={c.grey}>/</Txt><Gap $w={9} />
              <svg width="14" height="3" fill={c.green}><circle cx="1.500" cy="1.500" r="1.500" /><circle cx="7" cy="1.500" r="1.500" /><circle cx="12.500" cy="1.500" r="1.500" /></svg>
              <Gap $w={10} /><Txt $s={18} $c={c.grey}>/</Txt><Gap $w={7} />
              <Lifted $c={c.green} $ls={-0.05}>My first question group</Lifted>
              <Gap $w={7} /><Txt $s={18} $c={c.grey}>/</Txt><Gap $w={8} />
              <Lifted>G01Q02</Lifted>
            </Crumbs>
            <Btn $w={190} $pl={1}>
              <svg width="22" height="20" viewBox="0 0 22 20"><path d="M1 10v8.800h20V10" fill="none" stroke={c.ink} strokeWidth="2" /><path d="M9 0h4v7h4l-6 6.500L5 7h4z" fill={c.ink} /></svg>
              <Gap $w={6} />
              <Lifted $w={500}>Import question</Lifted>
            </Btn>
            <Grow />
            <Btn $w={105} $pl={6}>
              <CloseX s={14} w={1.6} />
              <Gap $w={10} />
              <Lifted $w={500}>Close</Lifted>
            </Btn>
            <Gap $w={5} />
            <Btn $w={180} $pl={2}>
              <svg width="19" height="19"><rect width="19" height="19" fill={c.ink} /><path d="M4.500 9.500l3.500 3.500 6.500-7" stroke="#fff" strokeWidth="2" fill="none" /></svg>
              <Gap $w={8} />
              <Lifted $w={500}>Save and close</Lifted>
            </Btn>
            <Gap $w={5} />
            <Btn $w={99} $bg={c.green} $pl={2}>
              <Icon s={18} h={14} vb="0 0 18 14" w={1.8} d="M1 7l5.500 5.500L17 1" />
              <Gap $w={8} />
              <Strong>Save</Strong>
            </Btn>
          </ActionBar>
          <Columns>
            <Sidebar />
            <EditorColumn />
            <SettingsPanel />
          </Columns>
        </Page>
        <Scrollbar>
          <Tri $up $c="#a3a3a3" />
          <Thumb />
          <Tri $c="#505050" />
        </Scrollbar>
      </Viewport>
      <BottomBar />
      <Grammarly>
        <svg width="35" height="35" viewBox="0 0 35 35" fill="none"><circle cx="17.500" cy="17.500" r="17.500" fill="#04866f" /><path d="M25.500 11.500A9.600 9.600 0 1 0 26 22.500" stroke="#fff" strokeWidth="2.400" /><path d="M18 21h8v7" stroke="#fff" strokeWidth="2.400" /></svg>
      </Grammarly>
      <HelpBubble>
        <svg width="23" height="22" fill="none"><path d="M1.500 1.500h20v14h-16l-4 4z" stroke="#fff" strokeWidth="2.200" /><text x="11.500" y="13.500" textAnchor="middle" fontFamily="Roboto" fontWeight="700" fontSize="14" fill="#fff">?</text></svg>
      </HelpBubble>
      <Watermark>
        <Txt $s={25.5} $ls={-0.8}>Activate Windows</Txt>
        <Txt $s={18.5} $ls={-0.55}>Go to Settings to activate Windows.</Txt>
      </Watermark>
      <Annotation width="240" height="160" viewBox="1560 159.5 240 160" fill="none">
        <path d="M1761.500 243C1757 250 1754 258 1749 265C1743 273 1737 279 1729 283C1722 285 1719 284 1713 287C1704 292 1697 293 1688 295C1680 297 1671 299 1662 298C1653 298 1643 297 1635 294C1626 291 1619 289 1613 285C1607 281 1600 276 1594 271L1580 258C1576 252 1576 241 1582 230C1587 221 1593 213 1600 208C1609 202 1620 197 1630 192C1637 188 1643 187 1649 184C1655 182 1660 179 1666 178C1677 177 1690 177 1700 178C1712 179 1724 181 1735 186C1741 189 1746 194 1749 199C1754 205 1758 212 1760 219C1764 228 1768 235 1770 243C1773 250 1775 257 1777 264" stroke="#0079d8" strokeWidth="7.500" strokeLinecap="round" strokeLinejoin="round" />
      </Annotation>
    </Screen>
  );
}
